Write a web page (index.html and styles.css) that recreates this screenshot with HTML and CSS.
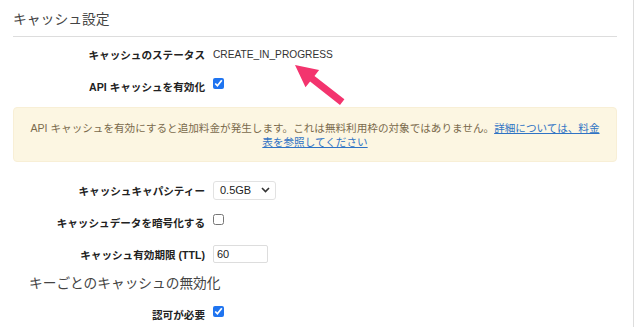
FILE: index.html
```html
<!DOCTYPE html>
<html lang="ja">
<head>
    <meta charset="UTF-8">
    <meta name="viewport" content="width=device-width, initial-scale=1.0">
    <title>キャッシュ設定</title>
    <link rel="stylesheet" href="styles.css">
</head>
<body>
    <div class="panel">
        <h2 class="section-title">キャッシュ設定</h2>

        <div class="form-row first">
            <label class="row-label">キャッシュのステータス</label>
            <span class="status">CREATE_IN_PROGRESS</span>
        </div>

        <div class="form-row">
            <label class="row-label" for="enable">API キャッシュを有効化</label>
            <input type="checkbox" id="enable" checked>
        </div>

        <div class="alert">
            API キャッシュを有効にすると追加料金が発生します。これは無料利用枠の対象ではありません。<a href="#">詳細については、料金表を参照してください</a>
        </div>

        <div class="form-row capacity">
            <label class="row-label">キャッシュキャパシティー</label>
            <div class="fake-select">
                <span>0.5GB</span>
                <svg width="9" height="6" viewBox="0 0 9 6"><path d="M1 1l3.5 3.5L8 1" fill="none" stroke="#333" stroke-width="1.6"/></svg>
            </div>
        </div>

        <div class="form-row">
            <label class="row-label" for="encrypt">キャッシュデータを暗号化する</label>
            <input type="checkbox" id="encrypt">
        </div>

        <div class="form-row">
            <label class="row-label" for="ttl">キャッシュ有効期限 (TTL)</label>
            <input type="text" id="ttl" class="ttl" value="60">
        </div>

        <h3 class="sub-title">キーごとのキャッシュの無効化</h3>

        <div class="form-row auth">
            <label class="row-label" for="auth">認可が必要</label>
            <input type="checkbox" id="auth" checked>
        </div>
    </div>

    <!-- annotation arrow -->
    <svg class="arrow" width="60" height="50" viewBox="290 60 60 50">
        <polygon points="295,65 319.1,70 314.5,75.9 344.4,99.3 340,104.9 310.1,81.4 305.5,87.2" fill="#f3346e"/>
    </svg>
</body>
</html>
```

FILE: styles.css
```css
html, body { height: 100%; overflow: hidden; }
body { margin: 0; background: #fff; font-family: "Liberation Sans", "Noto Sans CJK JP", sans-serif; color: #333; }
.panel { box-sizing: border-box; width: 634px; min-height: 100%; padding: 0 16px 0 13px; border-right: 1px solid #ddd; }
.section-title { margin: 0; padding: 10px 0 6px; font-size: 13.8px; font-weight: normal; line-height: 20px; color: #444; border-bottom: 1px solid #ddd; }
.form-row { display: flex; align-items: center; height: 20px; margin-top: 12px; }
.form-row.first { margin-top: 7px; }
.form-row.capacity { margin-top: 18px; }
.form-row.auth { margin-top: 10px; }
.row-label { width: 192px; margin-right: 8px; text-align: right; font-size: 10.6px; font-weight: bold; color: #222; }
.status { font-size: 10.2px; color: #333; }
input[type="checkbox"] { margin: 0 0 6px; width: 11px; height: 11px; accent-color: #1f74f0; }
.alert { margin-top: 11px; padding: 13px 13px 12px; background: #fcf6e2; border: 1px solid #f8efd6; border-radius: 4px; text-align: center; font-size: 10.6px; line-height: 14px; color: #7a6a4c; }
.alert a { color: #2f73c4; }
.fake-select { display: flex; align-items: center; justify-content: space-between; width: 50px; height: 17px; padding: 0 5px 0 6px; border: 1px solid #e2e2e2; border-radius: 3px; font-size: 11px; color: #222; }
.ttl { width: 47px; height: 16px; padding: 0 3px; margin: 0; border: 1px solid #ddd; border-radius: 2px; font-family: inherit; font-size: 11px; color: #222; }
.sub-title { margin: 10px 0 0 16px; font-size: 13.7px; font-weight: normal; line-height: 20px; color: #444; }
.arrow { position: absolute; left: 290px; top: 60px; }
```
